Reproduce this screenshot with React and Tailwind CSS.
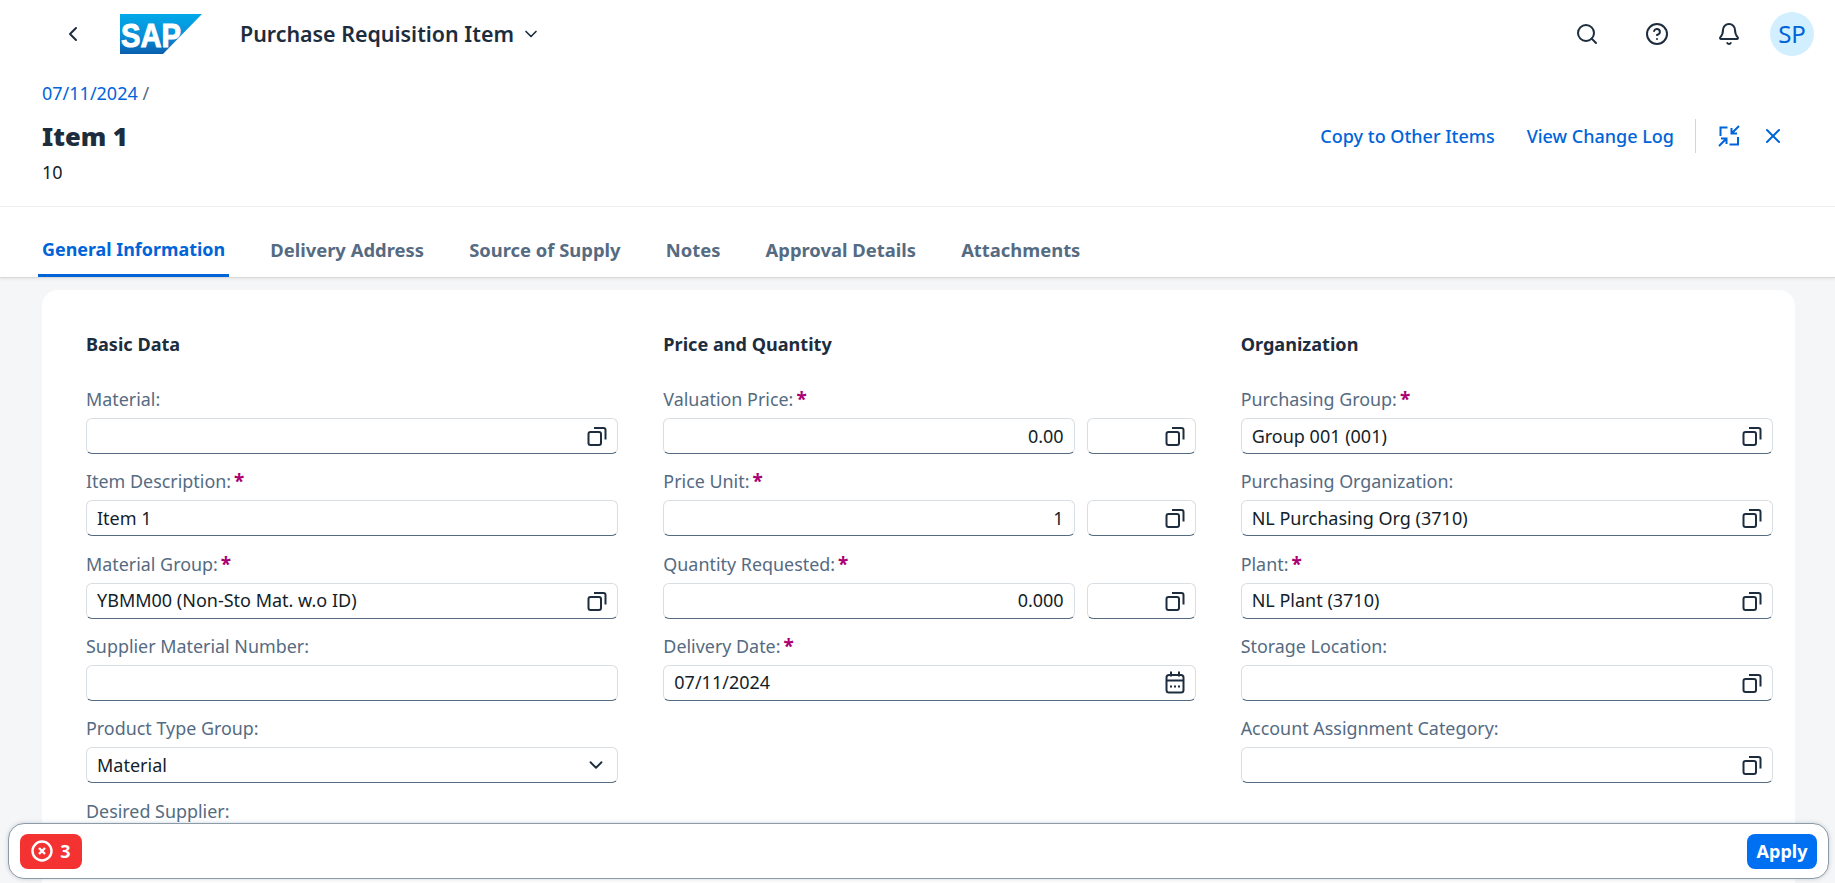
import React from "react";
import { Search, CircleHelp, Bell, ChevronLeft, ChevronDown, X } from "lucide-react";

const CopyIcon = () => (
  <svg width="20" height="20" viewBox="0 0 20 20" fill="none" stroke="#1d2d3e" strokeWidth="2" className="shrink-0">
    <rect x="1.5" y="6" width="12.5" height="13" rx="2" />
    <path d="M7 2h9.500a2 2 0 0 1 2 2v9.500" />
  </svg>
);

const CalendarIcon = () => (
  <svg width="20" height="23" viewBox="0 0 20 23" fill="none" stroke="#1d2d3e" strokeWidth="2" className="shrink-0">
    <rect x="1.500" y="4" width="17" height="17.500" rx="2.500" />
    <path d="M1.500 9.500h17M6 0.500v5M14 0.500v5" />
    <path d="M5 15.500h2M9 15.500h2M13 15.500h2" />
  </svg>
);

const CollapseIcon = () => (
  <svg width="22" height="22" viewBox="0 0 22 22" fill="none" stroke="#0064d9" strokeWidth="2">
    <path d="M9.500 2.500H2.500v8.500M20 12v7.500h-8.500" />
    <path d="M21 1l-7.500 7.500M13.500 3v5.500H19M1 21l7.500-7.500M8.500 19v-5.500H3" />
  </svg>
);

const Logo = () => (
  <svg width="82" height="40" viewBox="0 0 82 40" className="shrink-0">
    <defs>
      <linearGradient id="sapg" x1="0" y1="0" x2="0" y2="1">
        <stop offset="0" stopColor="#00a9ea" />
        <stop offset="0.55" stopColor="#0a8fd6" />
        <stop offset="1" stopColor="#0a5fae" />
      </linearGradient>
    </defs>
    <path d="M0 0h82L43 40H0z" fill="url(#sapg)" />
    <text x="1" y="32.500" fontFamily="'Liberation Sans', sans-serif" fontWeight="700" fontSize="33" fill="#fff" stroke="#fff" strokeWidth="1" textLength="60" lengthAdjust="spacingAndGlyphs">SAP</text>
  </svg>
);

const Label = ({ text, req }) => (
  <div className="h-[24px] leading-[24px] text-[17.900px] text-[#556b82] whitespace-nowrap flex items-center">
    <span>{text}:</span>
    {req && <span className="ml-[3px] text-[#aa0073] font-bold text-[19px] leading-[24px]">*</span>}
  </div>
);

const Box = ({ value, right, icon, className }) => (
  <div className={`h-[36px] flex items-center bg-white border border-[#d9dee3] border-b-[#556b82] rounded-[6px] px-[10px] text-[18px] text-[#131e29] ${right ? "justify-end" : "justify-between"} ${className || ""}`}>
    <span className="whitespace-nowrap">{value}</span>
    {icon}
  </div>
);

const Field = ({ label, req, children }) => (
  <div className="h-[82.33px] flex flex-col gap-[7px]">
    <Label text={label} req={req} />
    {children}
  </div>
);

const Text = ({ label, req, value }) => (
  <Field label={label} req={req}>
    <Box value={value} />
  </Field>
);

const Help = ({ label, req, value }) => (
  <Field label={label} req={req}>
    <Box value={value} icon={<CopyIcon />} />
  </Field>
);

const Unit = ({ label, value }) => (
  <Field label={label} req>
    <div className="flex gap-[12px]">
      <Box value={value} right className="flex-1" />
      <Box value="" icon={<CopyIcon />} className="w-[109px]" />
    </div>
  </Field>
);

const Section = ({ title, children }) => (
  <div className="flex flex-col">
    <h3 className="h-[24px] leading-[24px] text-[18.100px] font-bold text-[#1d2d3e] mb-[31px]">{title}</h3>
    {children}
  </div>
);

const tabs = ["General Information", "Delivery Address", "Source of Supply", "Notes", "Approval Details", "Attachments"];

export default function App() {
  return (
    <div className="relative h-screen overflow-hidden bg-[#f5f6f7] font-['Noto_Sans',sans-serif] flex flex-col">
      <div className="bg-white shrink-0 border-b border-[#d9d9d9] shadow-[0_1px_3px_rgba(0,0,0,0.08)] z-10">
        <div className="h-[68px] flex items-center pl-[61px] pr-[21px]">
          <ChevronLeft size={24} strokeWidth={2} color="#1d2d3e" />
          <div className="ml-[35px]"><Logo /></div>
          <div className="ml-[38px] flex items-center gap-[7px] text-[21.400px] font-semibold text-[#1d2d3e]">
            Purchase Requisition Item
            <ChevronDown size={20} strokeWidth={2} />
          </div>
          <div className="ml-auto flex items-center text-[#1d2d3e]">
            <Search size={24} strokeWidth={2} />
            <CircleHelp size={24} strokeWidth={2} className="ml-[46px]" />
            <Bell size={24} strokeWidth={2} className="ml-[48px]" />
            <div className="ml-[29px] w-[44px] h-[44px] rounded-full bg-[#d1efff] text-[#0064d9] text-[24px] flex items-center justify-center">SP</div>
          </div>
        </div>
        <div className="h-[139px] border-b border-[#eeeeee] pl-[42px] pr-[50px] flex justify-between">
          <div className="flex flex-col">
            <div className="text-[18px] leading-[24px] mt-[13px] text-[#556b82]"><span className="text-[#0064d9]">07/11/2024</span> /</div>
            <div className="text-[25.500px] leading-[34px] mt-[14px] font-black text-[#1d2d3e]">Item 1</div>
            <div className="text-[18px] leading-[24px] mt-[7px] text-[#131e29]">10</div>
          </div>
          <div className="flex items-center h-[40px] mt-[48px] text-[18px] font-medium text-[#0064d9]">
            <span>Copy to Other Items</span>
            <span className="ml-[32px]">View Change Log</span>
            <span className="ml-[21px] w-px h-[34px] bg-[#d0d5da]" />
            <span className="ml-[22px]"><CollapseIcon /></span>
            <X size={24} strokeWidth={2} className="ml-[21px]" />
          </div>
        </div>
        <div className="h-[70px] pl-[38px] flex items-end gap-[37.200px]">
          {tabs.map((t, i) => (
            <div key={t} className={`h-[70px] flex items-center px-[4px] pt-[18px] font-bold border-b-[3px] ${i === 0 ? "text-[17.900px] text-[#0064d9] border-[#0064d9]" : "text-[18.400px] text-[#556b82] border-transparent"}`}>
              {t}
            </div>
          ))}
        </div>
      </div>
      <div className="flex-1 min-h-0 pt-[12px] pl-[42px] pr-[40px]">
        <div className="bg-white rounded-[16px] h-[800px] pt-[42px] pl-[44px] pr-[22px] grid grid-cols-3 gap-x-[45px]">
          <Section title="Basic Data">
            <Help label="Material" value="" />
            <Text label="Item Description" req value="Item 1" />
            <Help label="Material Group" req value="YBMM00 (Non-Sto Mat. w.o ID)" />
            <Text label="Supplier Material Number" value="" />
            <Field label="Product Type Group">
              <Box value="Material" icon={<ChevronDown size={22} strokeWidth={2} color="#1d2d3e" />} />
            </Field>
            <Text label="Desired Supplier" value="" />
          </Section>
          <Section title="Price and Quantity">
            <Unit label="Valuation Price" value="0.00" />
            <Unit label="Price Unit" value="1" />
            <Unit label="Quantity Requested" value="0.000" />
            <Field label="Delivery Date" req>
              <Box value="07/11/2024" icon={<CalendarIcon />} />
            </Field>
          </Section>
          <Section title="Organization">
            <Help label="Purchasing Group" req value="Group 001 (001)" />
            <Help label="Purchasing Organization" value="NL Purchasing Org (3710)" />
            <Help label="Plant" req value="NL Plant (3710)" />
            <Help label="Storage Location" value="" />
            <Help label="Account Assignment Category" value="" />
          </Section>
        </div>
      </div>
      <div className="absolute left-[8px] right-[6px] bottom-[4px] h-[56px] bg-white border border-[#8d9aa8] rounded-[16px] shadow-[0_0_4px_rgba(85,107,130,0.3)] flex items-center justify-between px-[11px] z-20">
        <div className="h-[35px] w-[62px] rounded-[8px] bg-[#f53232] text-white font-bold text-[18px] flex items-center justify-center gap-[7px]">
          <svg width="22" height="22" viewBox="0 0 22 22" fill="none" stroke="#fff" strokeWidth="2.400">
            <circle cx="11" cy="11" r="9.500" />
            <path d="M8 8l6 6M14 8l-6 6" />
          </svg>
          3
        </div>
        <div className="h-[35px] w-[70px] rounded-[8px] bg-[#0070f2] text-white font-bold text-[18px] flex items-center justify-center">Apply</div>
      </div>
    </div>
  );
}
